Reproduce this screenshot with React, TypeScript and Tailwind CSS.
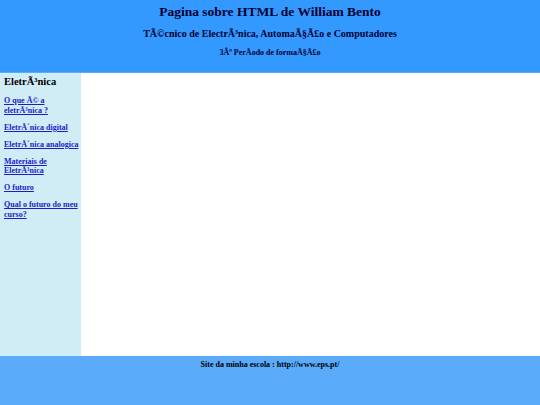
import React from "react";

const serif = { fontFamily: '"Liberation Serif", "Times New Roman", serif' };

export default function App() {
  const links: string[] = [
    "O que Ã© a eletrÃ³nica ?",
    "EletrÃ´nica digital",
    "EletrÃ´nica analogica",
    "Materiais de EletrÃ³nica",
    "O futuro",
    "Qual o futuro do meu curso?",
  ];
  return (
    <div className="w-[540px] h-[405px] flex flex-col text-[#000033]" style={serif}>
      <header className="h-[73px] bg-[#3399ff] border-b border-[#5aacfb] flex flex-col items-center pt-[3px]">
        <h1 className="text-[13.5px] font-bold leading-[17px]">Pagina sobre HTML de William Bento</h1>
        <h2 className="text-[10px] font-bold leading-[12px] mt-[8px]">
          TÃ©cnico de ElectrÃ³nica, AutomaÃ§Ã£o e Computadores
        </h2>
        <h3 className="text-[8px] font-bold leading-[10px] mt-[8px]">3Âº PerÃ­odo de formaÃ§Ã£o</h3>
      </header>
      <div className="flex flex-1">
        <nav className="w-[81px] bg-[#d0ecf5] pl-[4px] pt-[2px]">
          <h2 className="text-[10.5px] font-bold leading-[14px] text-black">EletrÃ³nica</h2>
          <ul className="mt-[7px] flex flex-col gap-[7.5px]">
            {links.map((l) => (
              <li key={l}>
                <a href="#" className="text-[8px] font-bold leading-[9.5px] underline text-[#1c1cc8] block">
                  {l}
                </a>
              </li>
            ))}
          </ul>
        </nav>
        <main className="flex-1 bg-white"></main>
      </div>
      <footer className="h-[49px] bg-[#5aacfb] flex justify-center pt-[4px]">
        <p className="text-[8px] font-bold leading-[10px] text-black">Site da minha escola : http://www.eps.pt/</p>
      </footer>
    </div>
  );
}
